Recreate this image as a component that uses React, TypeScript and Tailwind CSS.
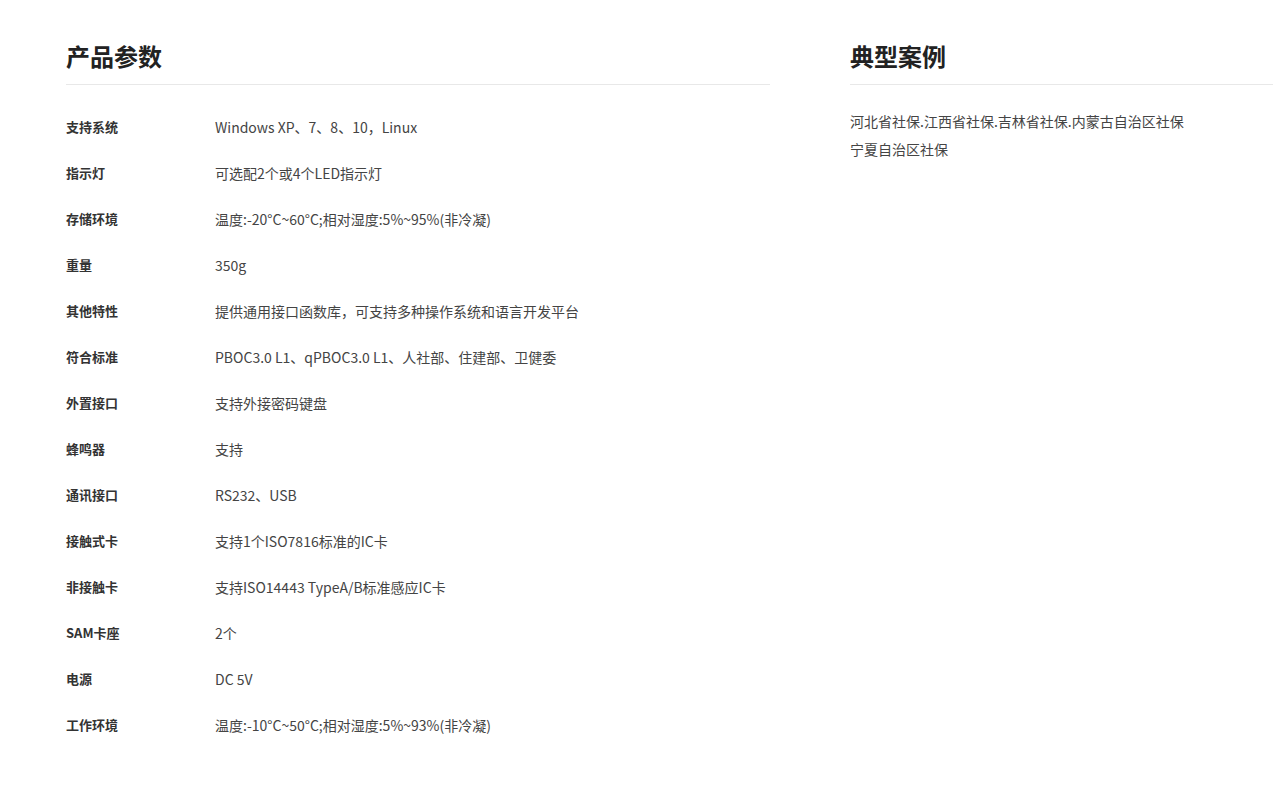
const rows: [string, string][] = [
  ["支持系统", "Windows XP、7、8、10，Linux"],
  ["指示灯", "可选配2个或4个LED指示灯"],
  ["存储环境", "温度:-20°C~60°C;相对湿度:5%~95%(非冷凝)"],
  ["重量", "350g"],
  ["其他特性", "提供通用接口函数库，可支持多种操作系统和语言开发平台"],
  ["符合标准", "PBOC3.0 L1、qPBOC3.0 L1、人社部、住建部、卫健委"],
  ["外置接口", "支持外接密码键盘"],
  ["蜂鸣器", "支持"],
  ["通讯接口", "RS232、USB"],
  ["接触式卡", "支持1个ISO7816标准的IC卡"],
  ["非接触卡", "支持ISO14443 TypeA/B标准感应IC卡"],
  ["SAM卡座", "2个"],
  ["电源", "DC 5V"],
  ["工作环境", "温度:-10°C~50°C;相对湿度:5%~93%(非冷凝)"],
];

export default function App() {
  return (
    <div
      className="w-[1273px] h-[795px] bg-white overflow-hidden flex pt-[38px] text-[#333]"
      style={{ fontFamily: '"Noto Sans CJK SC", "Noto Sans", sans-serif' }}
    >
      <div className="ml-[66px] w-[704px]">
        <h2 className="text-[24px] font-bold leading-[36px] pb-[10px] border-b border-[#e8e8e8] text-[#222]">产品参数</h2>
        <div className="pt-[19px]">
          {rows.map(([k, v]) => (
            <div key={k} className="flex h-[46px] items-center text-[14px]">
              <div className="w-[149px] font-bold text-[13px] text-[#333]">{k}</div>
              <div className="text-[#444]">{v}</div>
            </div>
          ))}
        </div>
      </div>
      <div className="ml-[80px] flex-1">
        <h2 className="text-[24px] font-bold leading-[36px] pb-[10px] border-b border-[#e8e8e8] text-[#222]">典型案例</h2>
        <p className="mt-[22px] w-[340px] text-[14px] leading-[28px] text-[#444]">
          河北省社保.江西省社保.吉林省社保.内蒙古自治区社保宁夏自治区社保
        </p>
      </div>
    </div>
  );
}
